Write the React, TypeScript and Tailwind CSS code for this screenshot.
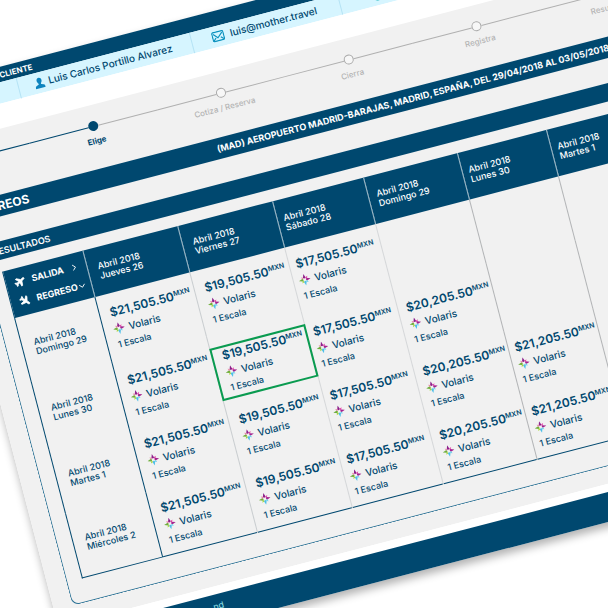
import React from "react";
import { ChevronDown, ChevronRight } from "lucide-react";

type Column = { month: string; day: string; width: string; pad: string; line: string };

const columns: Column[] = [
  { month: "Abril 2018", day: "Jueves 26", width: "w-[98px]", pad: "pl-2.5", line: "border-[#c9cdd0]" },
  { month: "Abril 2018", day: "Viernes 27", width: "w-[98px]", pad: "pl-2.5", line: "border-[#d5d7d9]" },
  { month: "Abril 2018", day: "Sábado 28", width: "w-[94px]", pad: "pl-1.5", line: "border-[#d5d7d9]" },
  { month: "Abril 2018", day: "Domingo 29", width: "w-[97px]", pad: "pl-2", line: "border-[#b2b4b6]" },
  { month: "Abril 2018", day: "Lunes 30", width: "w-[92px]", pad: "pl-1.5", line: "border-[#b2b4b6]" },
  { month: "Abril 2018", day: "Martes 1", width: "w-[98px]", pad: "pl-1.5", line: "border-[#b2b4b6]" },
];

type Row = { month: string; day: string; height: string; prices: (string | null)[]; selected?: number };

const rows: Row[] = [
  { month: "Abril 2018", day: "Domingo 29", height: "h-[66px]", prices: ["$21,505.50", "$19,505.50", "$17,505.50", null, null, null] },
  { month: "Abril 2018", day: "Lunes 30", height: "h-[70px]", prices: ["$21,505.50", "$19,505.50", "$17,505.50", "$20,205.50", null, null], selected: 1 },
  { month: "Abril 2018", day: "Martes 1", height: "h-[66px]", prices: ["$21,505.50", "$19,505.50", "$17,505.50", "$20,205.50", "$21,205.50", null] },
  { month: "Abril 2018", day: "Miércoles 2", height: "h-[66px]", prices: ["$21,505.50", "$19,505.50", "$17,505.50", "$20,205.50", "$21,205.50", null] },
];

const steps = ["Elige", "Cotiza / Reserva", "Cierra", "Registra", "Resumen"];

function VolarisMark() {
  return (
    <svg viewBox="0 0 12 12" className="-ml-px size-3 shrink-0" aria-hidden="true">
      <path d="M6 0 L7.400 4 L6 4.800 L4.600 4 Z" fill="#8c1f8a" />
      <path d="M7.400 3.600 L9.400 2.800 L8.400 5 L7 5 Z" fill="#e63fa8" />
      <path d="M12 6 L8 7.400 L7.200 6 L8 4.600 Z" fill="#a3238e" />
      <path d="M6 12 L4.600 8 L6 7.200 L7.400 8 Z" fill="#4fbfe8" />
      <path d="M7 7 L8.400 7 L9.200 9.200 L7.200 8.400 Z" fill="#6fd3ee" />
      <path d="M0 6 L4 4.600 L4.800 6 L4 7.400 Z" fill="#6fae3d" />
      <path d="M5 5 L3.600 5 L2.800 2.800 L4.800 3.600 Z" fill="#e58aa6" />
      <path d="M5 7 L4.800 8.400 L2.800 9.200 L3.600 7 Z" fill="#a9d63b" />
    </svg>
  );
}

function Plane({ className }: { className: string }) {
  return (
    <svg viewBox="0 0 24 24" className={className} fill="currentColor" aria-hidden="true">
      <path
        d="M21 16v-2.500l-7.500-5V3.200a1.700 1.700 0 0 0-3.400 0v5.300L2.500 13.500V16l7.600-2.300v5L7.800 20.500v2l4-1.200 4 1.200v-2l-2.300-1.800v-5z"
        stroke="currentColor"
        strokeWidth="1.500"
      />
    </svg>
  );
}

function UserIcon() {
  return (
    <svg viewBox="0 0 10 12" className="h-3 w-2.5 shrink-0" fill="#0d84bf" aria-hidden="true">
      <path d="M5 .5c1.500 0 2.500 1.200 2.500 2.700 0 1.300-.6 2.400-1.300 3v.9l2.600 1c.8.3 1.200.9 1.200 1.700v1.200H0V9.800c0-.8.4-1.400 1.200-1.700l2.600-1v-.9c-.7-.6-1.300-1.700-1.300-3C2.500 1.700 3.500.5 5 .5z" />
    </svg>
  );
}

function MailIcon() {
  return (
    <svg viewBox="0 0 13 11" className="h-[11px] w-[13px] shrink-0" fill="none" stroke="#0d93bf" strokeWidth="1.200" strokeLinejoin="round" aria-hidden="true">
      <rect x=".8" y="1" width="11.400" height="9" rx="1.200" />
      <path d="M2 2.500l4 4.500 5-4.500M1.500 9.200l2.500-2.500M11.500 9.200l-2.500-2.500" />
    </svg>
  );
}

function PhoneIcon() {
  return (
    <svg viewBox="0 0 12 12" className="size-3 shrink-0" fill="none" stroke="#15b3b8" strokeWidth="1.500" aria-hidden="true">
      <circle cx="6" cy="6" r="4.500" />
    </svg>
  );
}

function Fare({ price }: { price: string }) {
  return (
    <div className="flex h-[52px] flex-col">
      <div className="flex h-[18px] text-[12px] leading-[18px] font-semibold whitespace-nowrap">
        {price}
        <span className="text-[7px] leading-[13px]">MXN</span>
      </div>
      <div className="flex h-4 items-center gap-1 text-[10px] leading-4 font-medium">
        <VolarisMark />
        Volaris
      </div>
      <div className="text-[9px] leading-4 font-medium">1 Escala</div>
    </div>
  );
}

export default function App() {
  return (
    <div className="h-screen w-full overflow-hidden bg-white font-['Inter','Liberation_Sans',sans-serif] text-[#00486f]">
      <div className="mt-[88px] -ml-[82px] w-[130%] origin-top-left -rotate-[14.6deg] bg-white shadow-[0_5px_8px_rgba(0,0,0,0.3)]">
        <h2 className="h-[15px] bg-[#00486f] pl-9 text-[8px] leading-[17px] font-bold text-white">DATOS DEL CLIENTE</h2>

        <div className="flex h-[21px] items-stretch bg-[#d6f5ff] text-[10px] font-medium whitespace-nowrap">
          <div className="w-[98px] border-r border-[#b5e3f5]" />
          <div className="flex w-[179px] items-center gap-1 border-r border-[#b5e3f5] pl-4">
            <UserIcon />
            Luis Carlos Portillo Alvarez
          </div>
          <div className="flex w-[153px] items-center gap-1.5 border-r border-[#b5e3f5] pl-5">
            <MailIcon />
            luis@mother.travel
          </div>
          <div className="flex items-center pl-8">
            <PhoneIcon />
          </div>
        </div>

        <div className="h-6 bg-white" />

        <main className="bg-[#f1f1f1]">
          <ol className="flex h-16 pt-4 text-[8px]">
            <li className="mt-[5px] h-px w-[94px] shrink-0 bg-[#00486f]" />
            {steps.map((step, i) => (
              <li key={step} className="flex w-[132px] shrink-0 flex-col items-center">
                <div className="flex w-full items-center">
                  <span className={i === 0 ? "h-px flex-1 bg-[#00486f]" : "h-px flex-1 bg-[#b0b0b0]"} />
                  <span className={i === 0 ? "size-[10px] rounded-full bg-[#00486f]" : "size-[10px] rounded-full border border-[#a8a8a8] bg-[#f7f7f7]"} />
                  <span className="h-px flex-1 bg-[#b0b0b0]" />
                </div>
                <span className={i === 0 ? "mt-1 leading-3 font-bold" : "mt-1 leading-3 font-medium text-[#b4b4b4]"}>{step}</span>
              </li>
            ))}
          </ol>

          <div className="flex h-[21px] items-center bg-[#00486f] pl-[31px] font-bold whitespace-nowrap text-white">
            <h2 className="w-[243px] text-[12px]">AÉREOS</h2>
            <p className="text-[9px]">(MAD) AEROPUERTO MADRID-BARAJAS, MADRID, ESPAÑA, DEL 29/04/2018 AL 03/05/2018</p>
          </div>

          <section className="pt-6 pb-[17px]">
            <h3 className="h-[18px] bg-[#00486f] pl-[31px] text-[9px] leading-5 font-semibold text-white">RESULTADOS</h3>
            <div className="mx-[19px] rounded-b-lg border border-t-0 border-[#2d7396] px-[15px] pt-3 pb-[23px]">
              <table className="w-full table-fixed border-collapse border-b border-l border-[#00486f] text-left">
                <thead>
                  <tr className="h-12 bg-[#00486f] text-white">
                    <th scope="col" className="w-[83px] p-0 pl-2 align-middle text-[9px] font-bold">
                      <div className="flex h-5 items-center">
                        <Plane className="size-3 rotate-60" />
                        <span className="pl-1.5">SALIDA</span>
                        <ChevronRight className="ml-1.5 size-2.5" />
                      </div>
                      <div className="flex h-5 items-center">
                        <Plane className="size-3 rotate-135" />
                        <span className="pl-1.5">REGRESO</span>
                        <ChevronDown className="size-2.5" />
                      </div>
                    </th>
                    {columns.map((c) => (
                      <th key={c.day} scope="col" className={`${c.width} ${c.pad} border-l border-[#9db9c8] p-0 align-middle text-[9px] leading-[10px] font-medium whitespace-nowrap`}>
                        {c.month}
                        <br />
                        {c.day}
                      </th>
                    ))}
                    <td />
                  </tr>
                </thead>
                <tbody>
                  {rows.map((r) => (
                    <tr key={r.day} className={r.height}>
                      <th scope="row" className="p-0 pl-3 align-middle text-[9px] leading-[10px] font-medium whitespace-nowrap">
                        {r.month}
                        <br />
                        {r.day}
                      </th>
                      {r.prices.map((price, i) => (
                        <td key={i} className={`border-l p-0 pb-1 align-bottom ${i === 0 ? "border-[#00486f]" : columns[i - 1].line}`}>
                          {price && (
                            <button
                              type="button"
                              aria-pressed={r.selected === i}
                              className={`block w-full text-left ${columns[i].pad} ${r.selected === i ? "outline-2 -outline-offset-1 outline-[#0a9b50]" : ""}`}
                            >
                              <Fare price={price} />
                            </button>
                          )}
                        </td>
                      ))}
                      <td />
                    </tr>
                  ))}
                </tbody>
              </table>
            </div>
          </section>
        </main>

        <div className="h-2 bg-white" />
        <footer className="h-[29px] bg-[#00486f] pl-[155px] text-[9px] leading-6 text-[#8fe0e8]">nd</footer>
      </div>
    </div>
  );
}
